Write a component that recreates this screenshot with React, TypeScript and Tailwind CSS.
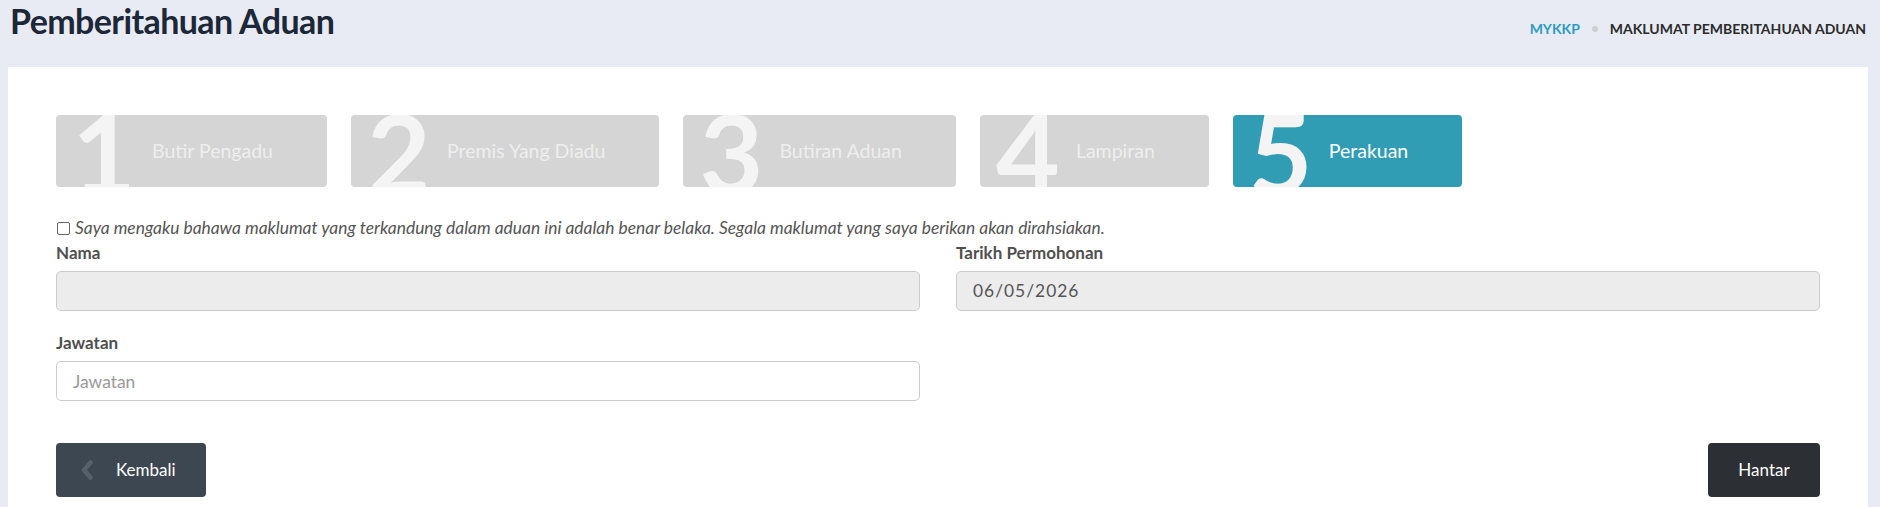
import React from "react";

const steps = [
  { n: "1", label: "Butir Pengadu", active: false },
  { n: "2", label: "Premis Yang Diadu", active: false },
  { n: "3", label: "Butiran Aduan", active: false },
  { n: "4", label: "Lampiran", active: false },
  { n: "5", label: "Perakuan", active: true },
];

export default function App() {
  return (
    <div className="min-h-[507px] bg-[#e8ebf3] font-['Lato','Liberation_Sans',sans-serif] text-[#555]">
      <div className="flex h-[67px] items-start justify-between pl-[10px] pr-[14px]">
        <h1 className="text-[34px] leading-[42px] font-bold tracking-[-0.6px] text-[#1c2738]">Pemberitahuan Aduan</h1>
        <div className="mt-[19px] flex items-center text-[14px] leading-[20px] font-bold">
          <span className="text-[#2f9cbf]">MYKKP</span>
          <span className="mx-[12px] h-[6px] w-[6px] rounded-full bg-[#cfcfcf]"></span>
          <span className="text-[#2b2b2b]">MAKLUMAT PEMBERITAHUAN ADUAN</span>
        </div>
      </div>
      <div className="ml-2 mr-3 min-h-[460px] bg-white px-12 pt-12 pb-12">
        <div className="flex gap-6">
          {steps.map((s) => (
            <div
              key={s.n}
              className={
                "flex h-[72px] items-center overflow-hidden rounded-[4px] pl-4 pr-[54px] " +
                (s.active ? "bg-[#319db5]" : "bg-[#d5d5d5]")
              }
            >
              <span className="w-[80px] shrink-0 text-[110px] leading-[72px] font-bold text-[#f4f4f4]">{s.n}</span>
              <span className={"text-[19.5px] whitespace-nowrap " + (s.active ? "text-white" : "text-[#eeeeee]")}>
                {s.label}
              </span>
            </div>
          ))}
        </div>
        <label className="mt-[31px] flex items-center text-[17.4px] leading-[20px] italic text-[#555]">
          <input
            type="checkbox"
            className="ml-[1px] mr-[5px] h-[13px] w-[13px] appearance-none rounded-[2px] border border-[#666] bg-white"
          />
          Saya mengaku bahawa maklumat yang terkandung dalam aduan ini adalah benar belaka. Segala maklumat yang saya berikan akan dirahsiakan.
        </label>
        <div className="mt-[5px] grid grid-cols-2 gap-x-9">
          <div>
            <div className="mb-2 text-[17px] leading-[20px] font-bold text-[#4f4f4f]">Nama</div>
            <div className="h-10 rounded-[5px] border border-[#cccccc] bg-[#ececec]"></div>
          </div>
          <div>
            <div className="mb-2 text-[17px] leading-[20px] font-bold text-[#4f4f4f]">Tarikh Permohonan</div>
            <div className="flex h-10 items-center rounded-[5px] border border-[#cccccc] bg-[#ececec] px-4 text-[17.4px] tracking-[1px] text-[#555]">
              06/05/2026
            </div>
          </div>
          <div className="mt-[22px]">
            <div className="mb-2 text-[17px] leading-[20px] font-bold text-[#4f4f4f]">Jawatan</div>
            <input
              placeholder="Jawatan"
              className="h-10 w-full rounded-[5px] border border-[#cccccc] bg-white px-4 text-[17.4px] text-[#555] outline-none placeholder:text-[#999]"
            />
          </div>
        </div>
        <div className="mt-[42px] flex items-center justify-between">
          <button className="flex h-[54px] w-[150px] items-center rounded-[4px] bg-[#3d4751] pl-[25px] text-[17px] text-white">
            <svg width="12" height="20" viewBox="0 0 12 20" className="mr-[23px]">
              <path d="M9.5 2.5 L3 10 L9.5 17.5" fill="none" stroke="#56616b" strokeWidth="4.5" strokeLinecap="round" strokeLinejoin="round" />
            </svg>
            Kembali
          </button>
          <button className="h-[54px] w-[112px] rounded-[4px] bg-[#2c3035] text-[17px] text-white">Hantar</button>
        </div>
      </div>
    </div>
  );
}
